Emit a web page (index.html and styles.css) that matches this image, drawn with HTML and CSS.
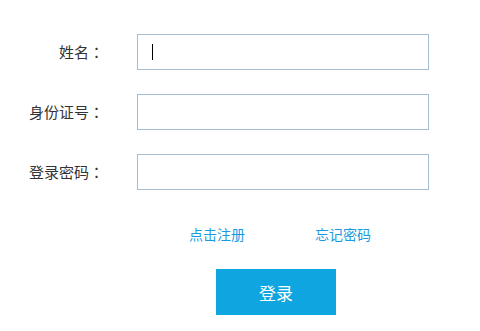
FILE: index.html
```html
<!DOCTYPE html>
<html lang="zh-CN">
<head>
<meta charset="utf-8">
<title>登录</title>
<link rel="stylesheet" href="styles.css">
</head>
<body>
<form class="login">
  <div class="row">
    <label class="label">姓名<span class="colon" lang="zh-TW">：</span></label>
    <div class="field">
      <input class="input" type="text">
      <span class="caret"></span>
    </div>
  </div>
  <div class="row">
    <label class="label">身份证号<span class="colon" lang="zh-TW">：</span></label>
    <div class="field"><input class="input" type="text"></div>
  </div>
  <div class="row">
    <label class="label">登录密码<span class="colon" lang="zh-TW">：</span></label>
    <div class="field"><input class="input" type="password"></div>
  </div>
  <div class="links">
    <a class="link" href="#">点击注册</a>
    <a class="link" href="#">忘记密码</a>
  </div>
  <div class="actions">
    <button class="btn" type="button">登录</button>
  </div>
</form>
</body>
</html>
```
FILE: styles.css
```css
html, body {
  margin: 0;
  padding: 0;
  background: #ffffff;
}
body {
  font-family: "Noto Sans CJK SC", "Noto Sans", sans-serif;
  color: #333333;
}
.login {
  padding-top: 34px;
}
.row {
  display: flex;
  align-items: center;
  height: 36px;
  margin-bottom: 24px;
}
.label {
  width: 104px;
  margin-right: 33px;
  text-align: right;
  font-size: 15px;
  line-height: 20px;
  color: #333333;
  white-space: nowrap;
}
.colon {
  font-family: "Noto Sans CJK TC", "Noto Sans CJK JP", sans-serif;
}
.field {
  position: relative;
  width: 292px;
  height: 36px;
}
.input {
  box-sizing: border-box;
  width: 292px;
  height: 36px;
  margin: 0;
  padding: 0 14px;
  border: 1px solid #a6bcd3;
  background: #ffffff;
  outline: none;
  font-family: inherit;
  font-size: 15px;
}
.caret {
  position: absolute;
  left: 15px;
  top: 10px;
  width: 1px;
  height: 16px;
  background: #000000;
}
.links {
  display: flex;
  padding-left: 189px;
  gap: 70px;
  margin-top: 34px;
  height: 20px;
  align-items: center;
}
.link {
  font-size: 14px;
  line-height: 20px;
  color: #1a9be0;
  text-decoration: none;
}
.actions {
  padding-left: 216px;
  margin-top: 25px;
}
.btn {
  display: block;
  width: 120px;
  height: 46px;
  margin: 0;
  padding: 0;
  border: none;
  background: #0ea5e1;
  color: #ffffff;
  font-family: inherit;
  font-size: 17px;
  cursor: pointer;
}
```
